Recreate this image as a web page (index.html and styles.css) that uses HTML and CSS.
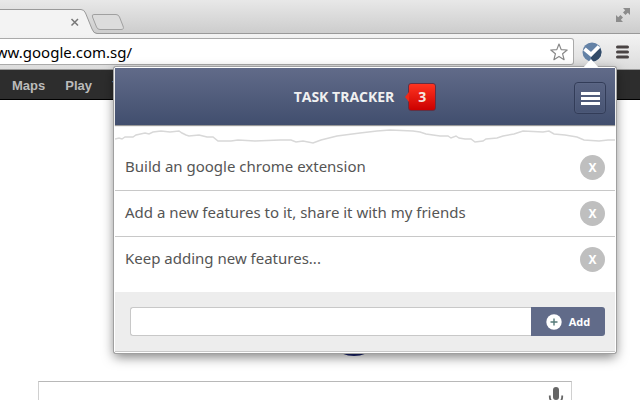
FILE: index.html
```
<!DOCTYPE html>

<html lang="en">

<head>

  <meta charset="UTF-8">

  <meta name="viewport" content="width=device-width, initial-scale=1.0">

  <title>Task Tracker</title>

  <link rel="stylesheet" href="styles.css">

</head>

<body>

  <!-- tab strip -->
  <div class="tab-strip">

    <svg class="tabs" width="130" height="34" viewBox="0 0 130 34" aria-hidden="true">
      <path d="M-2 9.500H81Q84 9.500 85.500 13L92 29Q93.500 33.500 97 33.500H130V35H-2Z" fill="#f3f3f3"/>
      <path d="M-2 9.500H81Q84 9.500 85.500 13L92 29Q93.500 33.500 97 33.500H130" fill="none" stroke="#999"/>
      <path d="M71.500 19L78 25.500M78 19L71.500 25.500" stroke="#777" stroke-width="1.500"/>
      <path d="M94 14.500H116Q118.500 14.500 119.500 17L123 26Q124.500 29.500 121 29.500H100Q97.500 29.500 96.500 27L92.500 17Q91.500 14.500 94 14.500Z" fill="#dcdcdc" stroke="#a0a0a0"/>
    </svg>

    <svg class="expand" width="14" height="14" viewBox="0 0 14 14" aria-hidden="true">
      <path d="M7 0H14V7L11.800 4.800L9.500 7L7 4.500L9.200 2.200ZM0 7L2.200 9.200L4.500 7L7 9.500L4.800 11.800L7 14H0Z" fill="#8c8c8c"/>
    </svg>

  </div>

  <!-- address bar -->
  <div class="toolbar">

    <div class="omnibox">
      <input type="text" class="address" value="www.google.com.sg/" aria-label="Address">
      <svg width="18" height="18" viewBox="0 0 18 18" aria-hidden="true">
        <path d="M9 1L11.200 6.600L17.200 7L12.600 10.800L14.100 16.700L9 13.400L3.900 16.700L5.400 10.800L.8 7L6.800 6.600Z" fill="#fff" stroke="#888" stroke-width="1.200" stroke-linejoin="round"/>
      </svg>
    </div>

    <button class="tool extension" aria-label="Task Tracker">
      <svg width="20" height="20" viewBox="0 0 20 20">
        <defs>
          <clipPath id="disc"><circle cx="10" cy="10" r="9.500"/></clipPath>
        </defs>
        <g clip-path="url(#disc)">
          <rect width="20" height="20" fill="#6482a6"/>
          <path d="M9 13L17 5L20 8V20H9Z" fill="#324b68"/>
          <path d="M2.500 7L9 12.500L17 4.500" fill="none" stroke="#fff" stroke-width="3.800"/>
        </g>
      </svg>
    </button>

    <button class="tool" aria-label="Menu">
      <svg width="13" height="14" viewBox="0 0 13 14">
        <path d="M1.500 2H11.500M1.500 7H11.500M1.500 12H11.500" stroke="#4a4444" stroke-width="3" stroke-linecap="round"/>
      </svg>
    </button>

  </div>

  <nav class="site-nav">
    <a href="#">Maps</a>
    <a href="#">Play</a>
    <a href="#">YouTube</a>
  </nav>

  <main class="page">
    <div class="doodle"></div>
    <form class="search">
      <input type="text" aria-label="Search">
      <svg width="16" height="22" viewBox="0 0 16 22" aria-hidden="true">
        <rect x="5" y="0" width="6" height="13" rx="3" fill="#666"/>
        <path d="M1.800 8.500V10A6.200 6.200 0 0 0 14.200 10V8.500M8 16V21" fill="none" stroke="#666" stroke-width="1.800"/>
      </svg>
    </form>
  </main>

  <!-- extension popup -->
  <section class="popup">

    <header class="popup-header">
      <h1>TASK TRACKER</h1>
      <span class="count">3</span>
      <button class="menu" aria-label="Options">
        <span></span>
        <span></span>
        <span></span>
      </button>
    </header>

    <svg class="tear" height="18" viewBox="0 0 500 18" preserveAspectRatio="none" aria-hidden="true">
      <path d="M0 12L4 11L7 12L10 10L18 10L21 8L30 6L34 7L38 5L46 4L55 5L64 4L67 6L71 8L74 9L84 8L92 10L98 10L103 14L116 14L123 13L140 14L165 13L176 13L181 15L188 14L198 16L206 13L222 9L245 6L262 4L275 3L298 4L305 5L311 7L325 9L333 9L336 11L341 9L344 11L350 12L356 12L360 15L368 14L371 12L382 11L388 9L399 7L408 4L428 5L434 4L439 7L450 8L462 10L469 13L484 14L493 13L500 13"/>
    </svg>

    <ul class="tasks">
      <li>
        <span>Build an google chrome extension</span>
        <button aria-label="Remove">X</button>
      </li>
      <li>
        <span>Add a new features to it, share it with my friends</span>
        <button aria-label="Remove">X</button>
      </li>
      <li>
        <span>Keep adding new features...</span>
        <button aria-label="Remove">X</button>
      </li>
    </ul>

    <form class="add-form">
      <input type="text" aria-label="New task">
      <button type="button">
        <svg width="16" height="16" viewBox="0 0 16 16" aria-hidden="true">
          <circle cx="8" cy="8" r="7.700" fill="#fff"/>
          <path d="M8 4.500V11.500M4.500 8H11.500" stroke="#557a78" stroke-width="1.400"/>
        </svg>
        Add
      </button>
    </form>

  </section>

</body>

</html>
```

FILE: styles.css
```
* {

  box-sizing: border-box;
  margin: 0;
  padding: 0;

}

body {

  position: relative;
  height: 100vh;
  overflow: hidden;
  background: #fff;
  font-family: "Open Sans", "Noto Sans", sans-serif;

}

button {

  border: none;
  background: none;
  font-family: inherit;
  cursor: pointer;

}

svg {

  display: block;
  flex: none;

}

.tab-strip {

  display: flex;
  justify-content: space-between;
  height: 34px;
  padding-right: 10px;
  background: linear-gradient(#e8e8e8, #cccccc);
  box-shadow: inset 0 -1px #999;

}

.expand {

  margin-top: 8px;

}

.toolbar {

  display: flex;
  align-items: center;
  height: 36px;
  padding-right: 11px;
  background: linear-gradient(#f3f3f3, #dcdcdc);
  border-bottom: 1px solid #999;

}

.omnibox {

  display: flex;
  flex: 1;
  align-items: center;
  height: 27px;
  margin-right: 8px;
  padding-right: 5px;
  background: #fff;
  border: 1px solid #aaa;
  border-left: none;
  border-radius: 0 3px 3px 0;

}

.address {

  flex: 1;
  border: none;
  outline: none;
  background: none;
  color: #000;
  font-family: "Noto Sans", sans-serif;
  font-size: 15px;
  text-indent: -16px;

}

.tool {

  margin-left: 14px;

}

.extension {

  margin-left: 0;

}

.site-nav {

  display: flex;
  align-items: center;
  gap: 20px;
  height: 30px;
  padding: 2px 12px 0;
  background: #2d2d2d;
  border-bottom: 1px solid #000;

}

.site-nav a {

  color: #bbb;
  font-family: "Liberation Sans", Arial, sans-serif;
  font-size: 13px;
  font-weight: bold;
  text-decoration: none;

}

.page {

  padding: 196px 68px 0 38px;

}

.doodle {

  width: 60px;
  height: 60px;
  margin: 0 auto 25px 286px;
  background: #1a2470;
  border-radius: 50%;

}

.search {

  display: flex;
  height: 38px;
  padding: 5px 7px;
  border: 1px solid #d0d0d0;
  border-top-color: #b8b8b8;

}

.search input {

  flex: 1;
  border: none;
  outline: none;

}

.popup {

  position: absolute;
  top: 67px;
  right: 24px;
  left: 114px;
  background: #fff;
  border: 1px solid #fff;
  border-radius: 2px;
  box-shadow: 0 0 0 1px #a0a0a0, 0 4px 12px rgba(0, 0, 0, 0.5);

}

/* arrow up to the toolbar icon */
.popup::before {

  content: "";
  position: absolute;
  top: -9px;
  right: 16px;
  border: 8px solid transparent;
  border-top: none;
  border-bottom: 9px solid #fff;

}

.popup-header {

  position: relative;
  display: flex;
  align-items: center;
  justify-content: center;
  gap: 14px;
  height: 57px;
  background: linear-gradient(#616b89, #414e6e);
  box-shadow: 0 1px 1px #999;

}

.popup-header h1 {

  color: #f0f0f0;
  font-size: 14px;
  font-weight: 700;

}

.count {

  position: relative;
  width: 28px;
  height: 28px;
  background: linear-gradient(#ff3420, #cc0000);
  border: 1px solid #623044;
  border-radius: 3px;
  color: #f5e6e0;
  font-size: 14px;
  font-weight: 700;
  line-height: 26px;
  text-align: center;

}

.count::before {

  content: "";
  position: absolute;
  top: 8px;
  left: -4px;
  border: 5px solid transparent;
  border-right: 4px solid #f02818;
  border-left: none;

}

.menu {

  position: absolute;
  top: 14px;
  right: 9px;
  display: flex;
  flex-direction: column;
  align-items: center;
  justify-content: center;
  gap: 2px;
  width: 32px;
  height: 32px;
  border: 1px solid #323c58;
  border-radius: 4px;
  box-shadow: inset 0 0 1px #7d88a4;

}

.menu span {

  width: 19px;
  height: 3px;
  background: #fff;

}

.tear {

  width: 100%;
  margin-top: 2px;
  fill: none;
  stroke: #d8d8d8;
  stroke-width: 1.5;

}

.tasks {

  list-style: none;

}

.tasks li {

  display: flex;
  align-items: center;
  justify-content: space-between;
  height: 46px;
  padding: 0 10px;
  border-bottom: 1px solid #c8c8c8;
  color: #555;
  font-family: "Noto Sans", sans-serif;
  font-size: 15px;

}

.tasks li:last-child {

  height: 55px;
  padding-bottom: 10px;
  border-bottom: none;

}

.tasks span {

  padding-bottom: 4px;

}

.tasks button {

  width: 25px;
  height: 25px;
  background: #bfbfbf;
  border-radius: 50%;
  color: #fff;
  font-size: 12px;
  font-weight: 700;
  line-height: 25px;

}

.add-form {

  display: flex;
  padding: 15px 10px 15px 15px;
  background: #ededed;
  border-bottom: 1px solid #c8c8c8;

}

.add-form input {

  flex: 1;
  height: 29px;
  padding: 0 8px;
  background: #fff;
  border: 1px solid #c8c8c8;
  border-right: none;
  border-radius: 3px 0 0 3px;
  outline: none;

}

.add-form button {

  display: flex;
  align-items: center;
  justify-content: center;
  gap: 7px;
  width: 74px;
  background: #616b89;
  border-radius: 0 3px 3px 0;
  color: #fff;
  font-size: 11px;
  font-weight: 700;

}
```
